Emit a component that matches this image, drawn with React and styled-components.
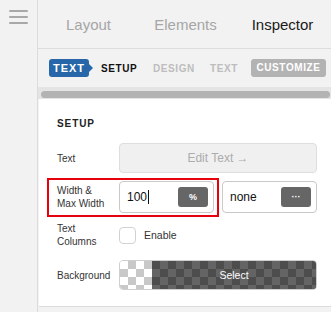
import React from 'react'
import styled, { createGlobalStyle } from 'styled-components'

const GlobalStyle = createGlobalStyle`
  html, body {
    margin: 0;
    padding: 0;
    background: #f2f2f2;
  }
  body {
    font-family: "Liberation Sans", Arial, sans-serif;
    color: #222;
  }
`

const tabs = ['Layout', 'Elements', 'Inspector']
const subTabs = [
  { label: 'SETUP', tone: 'active', width: 35, gap: 17 },
  { label: 'DESIGN', tone: 'muted', width: 40, gap: 17 },
  { label: 'TEXT', tone: 'muted', width: 28, gap: 13 },
]

function App() {
  return (
    <StPage>
      <GlobalStyle />
      <StSidebar>
        <StBurger>
          <span />
          <span />
          <span />
        </StBurger>
      </StSidebar>
      <StMain>
        <StTabBar>
          {tabs.map((t) => (
            <StTab key={t} active={t === 'Inspector'}>{t}</StTab>
          ))}
        </StTabBar>
        <StSubBar>
          <StBadge>TEXT</StBadge>
          {subTabs.map((s) => (
            <StSubTab key={s.label} tone={s.tone} width={s.width} gap={s.gap}>{s.label}</StSubTab>
          ))}
          <StPill>CUSTOMIZE</StPill>
        </StSubBar>
        <StTrack>
          <StThumb />
        </StTrack>
        <StPanel>
          <StHeading>SETUP</StHeading>

          <StRow top={13}>
            <StLabel>Text</StLabel>
            <StEditButton>Edit Text →</StEditButton>
          </StRow>

          <StRow top={8}>
            <StHighlight />
            <StLabel>Width &amp;<br />Max Width</StLabel>
            <StPair>
              <StInput>
                <StValue>100<StCaret /></StValue>
                <StUnit>%</StUnit>
              </StInput>
              <StInput>
                <StValue>none</StValue>
                <StUnit>···</StUnit>
              </StInput>
            </StPair>
          </StRow>

          <StRow top={9}>
            <StLabel>Text<br />Columns</StLabel>
            <StCheckRow>
              <StCheckbox />
              <span>Enable</span>
            </StCheckRow>
          </StRow>

          <StRow top={12}>
            <StLabel>Background</StLabel>
            <StSwatch>
              <StLight />
              <StDark>Select</StDark>
            </StSwatch>
          </StRow>
        </StPanel>
      </StMain>
    </StPage>
  )
}

export default App

const StPage = styled.div`
  display: flex;
  width: 331px;
  height: 312px;
  overflow: hidden;
  background: #f2f2f2;
`

const StSidebar = styled.div`
  width: 38px;
  flex-shrink: 0;
  border-right: 1px solid #dcdcdc;
  background: #f2f2f2;
  display: flex;
  justify-content: center;
  padding-top: 10px;
  box-sizing: border-box;
`

const StBurger = styled.div`
  display: flex;
  flex-direction: column;
  gap: 4px;
  width: 19px;
  span {
    display: block;
    height: 2px;
    background: #a8a8a8;
    border-radius: 1px;
  }
`

const StMain = styled.div`
  flex: 1;
  display: flex;
  flex-direction: column;
  min-width: 0;
`

const StTabBar = styled.div`
  height: 48px;
  display: grid;
  grid-template-columns: 1fr 1fr 1fr;
  align-items: center;
  border-bottom: 1px solid #dcdcdc;
  padding-left: 2px;
`

const StTab = styled.div`
  text-align: center;
  font-size: 15px;
  color: ${({ active }) => (active ? '#1a1a1a' : '#a6a6a6')};
`

const StSubBar = styled.div`
  height: 38px;
  display: flex;
  align-items: center;
  padding-left: 11px;
  white-space: nowrap;
  & > * {
    flex-shrink: 0;
  }
`

const StBadge = styled.div`
  position: relative;
  background: #2766a8;
  color: #fff;
  font-size: 11px;
  font-weight: 700;
  letter-spacing: 1px;
  width: 40px;
  text-align: center;
  height: 18px;
  line-height: 18px;
  border-radius: 3px;
  margin-right: 12px;
  &::after {
    content: '';
    position: absolute;
    right: -4px;
    top: 5px;
    border-top: 4px solid transparent;
    border-bottom: 4px solid transparent;
    border-left: 4px solid #2766a8;
  }
`

const StSubTab = styled.div`
  width: ${({ width }) => width}px;
  text-align: center;
  font-size: 10px;
  font-weight: 700;
  letter-spacing: 0.6px;
  color: ${({ tone }) => (tone === 'active' ? '#111' : '#bdbdbd')};
  margin-right: ${({ gap }) => gap}px;
`

const StPill = styled.div`
  background: #b3b3b3;
  color: #fff;
  font-size: 10px;
  font-weight: 700;
  letter-spacing: 0.6px;
  width: 75px;
  text-align: center;
  height: 18px;
  line-height: 18px;
  border-radius: 3px;
`

const StTrack = styled.div`
  height: 12px;
  background: #e4e4e4;
  padding: 4px 1px 1px 3px;
  box-sizing: border-box;
`

const StThumb = styled.div`
  height: 7px;
  background: #b3b3b3;
  border-radius: 4px;
`

const StPanel = styled.div`
  background: #fff;
  height: 208px;
  border-bottom: 1px solid #dcdcdc;
  padding: 18px 14px 0 18px;
  box-sizing: border-box;
  margin-left: 1px;
`

const StHeading = styled.div`
  font-size: 10px;
  line-height: 13px;
  font-weight: 700;
  letter-spacing: 0.9px;
  color: #222;
`

const StRow = styled.div`
  position: relative;
  display: grid;
  grid-template-columns: 62px 1fr;
  align-items: center;
  margin-top: ${({ top }) => top}px;
`

const StLabel = styled.div`
  font-size: 10px;
  line-height: 13px;
  color: #333;
`

const StHighlight = styled.div`
  position: absolute;
  left: -10px;
  top: -3px;
  width: 172px;
  height: 39px;
  border: 2px solid #e8000b;
  box-sizing: border-box;
  pointer-events: none;
`

const StEditButton = styled.div`
  height: 30px;
  border: 1px solid #dedede;
  border-radius: 4px;
  background: #f0f0f0;
  box-sizing: border-box;
  display: flex;
  align-items: center;
  justify-content: center;
  font-size: 12px;
  color: #acacac;
`

const StPair = styled.div`
  display: grid;
  grid-template-columns: 95px 1fr;
  gap: 8px;
`

const StInput = styled.div`
  height: 32px;
  border: 1px solid #c9c9c9;
  border-radius: 4px;
  box-sizing: border-box;
  display: flex;
  align-items: center;
  justify-content: space-between;
  padding: 0 5px 0 7px;
  background: #fff;
`

const StValue = styled.div`
  display: flex;
  align-items: center;
  font-size: 12px;
  color: #111;
`

const StCaret = styled.span`
  display: inline-block;
  width: 1px;
  height: 14px;
  background: #111;
  margin-left: 1px;
`

const StUnit = styled.div`
  width: 30px;
  height: 20px;
  border-radius: 3px;
  background: #666;
  color: #fff;
  font-size: 9px;
  font-weight: 700;
  display: flex;
  align-items: center;
  justify-content: center;
`

const StCheckRow = styled.div`
  display: flex;
  align-items: center;
  gap: 8px;
  font-size: 10.5px;
  color: #333;
`

const StCheckbox = styled.div`
  width: 17px;
  height: 17px;
  border: 1px solid #d2d2d2;
  border-radius: 4px;
  box-sizing: border-box;
`

const StSwatch = styled.div`
  height: 30px;
  border: 1px solid #cfcfcf;
  border-radius: 4px;
  box-sizing: border-box;
  overflow: hidden;
  display: flex;
`

const checker = (a, b) => `
  background-color: ${a};
  background-image:
    linear-gradient(45deg, ${b} 25%, transparent 25%, transparent 75%, ${b} 75%),
    linear-gradient(45deg, ${b} 25%, transparent 25%, transparent 75%, ${b} 75%);
  background-size: 16px 16px;
  background-position: 0 0, 8px 8px;
`

const StLight = styled.div`
  width: 32px;
  ${checker('#ffffff', '#c8c8c8')}
`

const StDark = styled.div`
  flex: 1;
  ${checker('#4d4d4d', '#646464')}
  display: flex;
  align-items: center;
  justify-content: center;
  color: #fff;
  font-size: 10.5px;
`
